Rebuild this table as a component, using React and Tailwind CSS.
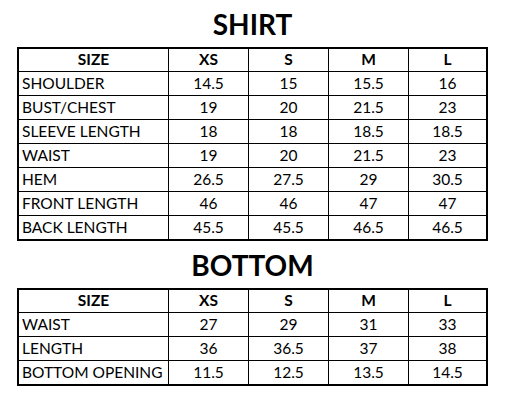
import React from 'react';

const sizes = ['XS', 'S', 'M', 'L'];

const shirt = [
  ['SHOULDER', '14.5', '15', '15.5', '16'],
  ['BUST/CHEST', '19', '20', '21.5', '23'],
  ['SLEEVE LENGTH', '18', '18', '18.5', '18.5'],
  ['WAIST', '19', '20', '21.5', '23'],
  ['HEM', '26.5', '27.5', '29', '30.5'],
  ['FRONT LENGTH', '46', '46', '47', '47'],
  ['BACK LENGTH', '45.5', '45.5', '46.5', '46.5'],
];

const bottom = [
  ['WAIST', '27', '29', '31', '33'],
  ['LENGTH', '36', '36.5', '37', '38'],
  ['BOTTOM OPENING', '11.5', '12.5', '13.5', '14.5'],
];

const SizeTable = ({ title, rows }) => (
  <section className="w-[471px]">
    <h2 className="flex h-[47px] items-center justify-center text-[28px] font-bold leading-none text-black">
      {title}
    </h2>
    <div className="border-2 border-black">
      <div className="grid grid-cols-[149px_79px_79px_79px_77px] gap-px bg-black">
        <div className="flex h-[22px] items-center justify-center bg-white text-[15.5px] font-bold">SIZE</div>
        {sizes.map((s) => (
          <div key={s} className="flex h-[22px] items-center justify-center bg-white text-[15.5px] font-bold">
            {s}
          </div>
        ))}
        {rows.map((row) =>
          row.map((cell, i) => (
            <div
              key={row[0] + i}
              className={
                i === 0
                  ? 'flex h-[23px] items-center whitespace-nowrap bg-white pl-[3px] text-[15.5px]'
                  : 'flex h-[23px] items-center justify-center bg-white text-[15.5px]'
              }
            >
              {cell}
            </div>
          ))
        )}
      </div>
    </div>
  </section>
);

export default function App() {
  return (
    <div className="h-[410px] w-[508px] bg-white pl-[17px] text-black [font-family:Lato,'Open_Sans',sans-serif]">
      <SizeTable title="SHIRT" rows={shirt} />
      <SizeTable title="BOTTOM" rows={bottom} />
    </div>
  );
}
